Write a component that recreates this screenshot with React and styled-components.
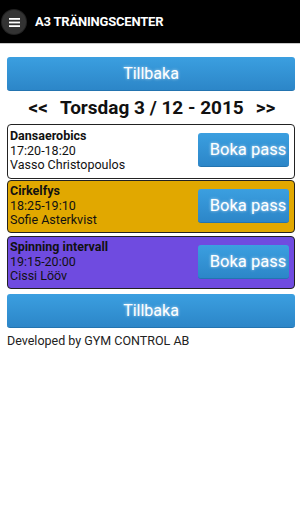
import React from 'react';
import styled, { createGlobalStyle } from 'styled-components';

const GlobalStyle = createGlobalStyle`
  body {
    margin: 0;
    background: #fff;
    font-family: Roboto, "Liberation Sans", sans-serif;
  }
`;

const Header = styled.div`
  height: 43px;
  background: #000;
  border-bottom: 1px solid #c8c8c8;
  display: flex;
  align-items: center;
  padding-left: 2px;
  gap: 9px;
`;

const MenuButton = styled.div`
  width: 24px;
  height: 24px;
  border-radius: 50%;
  background: #333;
  box-shadow: 0 0 0 1px #222;
  display: flex;
  align-items: center;
  justify-content: center;
  margin-top: 1px;
`;

const Title = styled.div`
  color: #fff;
  font-weight: 700;
  font-size: 13px;
  letter-spacing: -0.2px;
`;

const Content = styled.div`
  padding: 13px 5px 0 7px;
  display: flex;
  flex-direction: column;
`;

const BlueButton = styled.div`
  box-sizing: border-box;
  height: 34px;
  border-radius: 3px;
  background: linear-gradient(#3b9fe0, #2c86c8);
  border-bottom: 1px solid #2374b0;
  color: #fff;
  font-size: 16px;
  display: flex;
  align-items: center;
  justify-content: center;
  text-shadow: 0 0 3px rgba(255, 255, 255, 0.7);
  flex-shrink: 0;
`;

const DateRow = styled.div`
  display: flex;
  justify-content: center;
  align-items: center;
  gap: 12px;
  font-weight: 700;
  font-size: 19px;
  color: #111;
  height: 33px;
  padding-left: 2px;
`;

const Card = styled.div`
  box-sizing: border-box;
  height: ${p => p.$h || 53}px;
  margin-bottom: ${p => p.$mb || 2}px;
  border: 1px solid #222;
  border-radius: 4px;
  background: ${p => p.$bg};
  display: flex;
  align-items: center;
  justify-content: space-between;
  padding: 0 5px 0 2px;
`;

const Info = styled.div`
  font-size: 12.5px;
  line-height: 14.5px;
  color: #111;
  margin-top: -1px;
`;

const Name = styled.div`
  font-weight: 700;
`;

const BookButton = styled(BlueButton)`
  width: 91px;
  padding-left: 9px;
  font-size: 16.5px;
  margin-top: ${p => p.$mt || 0}px;
`;

const Footer = styled.div`
  margin-top: 5px;
  font-size: 12.5px;
  color: #222;
`;

const classes = [
  { name: 'Dansaerobics', time: '17:20-18:20', who: 'Vasso Christopoulos', bg: '#fff', h: 55, mb: 1, mt: -3 },
  { name: 'Cirkelfys', time: '18:25-19:10', who: 'Sofie Asterkvist', bg: '#e1a800', h: 53, mb: 3, mt: -1 },
  { name: 'Spinning intervall', time: '19:15-20:00', who: 'Cissi Lööv', bg: '#6f4be0', h: 53, mb: 5, mt: -1 },
];

export default function App() {
  return (
    <>
      <GlobalStyle />
      <Header>
        <MenuButton>
          <svg width="11" height="9" viewBox="0 0 11 9">
            <rect x="0" y="0" width="11" height="1.8" fill="#fff" />
            <rect x="0" y="3.6" width="11" height="1.8" fill="#fff" />
            <rect x="0" y="7.2" width="11" height="1.8" fill="#fff" />
          </svg>
        </MenuButton>
        <Title>A3 TRÄNINGSCENTER</Title>
      </Header>
      <Content>
        <BlueButton>Tillbaka</BlueButton>
        <DateRow>
          <span>&lt;&lt;</span>
          <span>Torsdag 3 / 12 - 2015</span>
          <span>&gt;&gt;</span>
        </DateRow>
        {classes.map(c => (
          <Card key={c.name} $bg={c.bg} $h={c.h} $mb={c.mb}>
            <Info>
              <Name>{c.name}</Name>
              <div>{c.time}</div>
              <div>{c.who}</div>
            </Info>
            <BookButton $mt={c.mt}>Boka pass</BookButton>
          </Card>
        ))}
        <BlueButton>Tillbaka</BlueButton>
        <Footer>Developed by GYM CONTROL AB</Footer>
      </Content>
    </>
  );
}
